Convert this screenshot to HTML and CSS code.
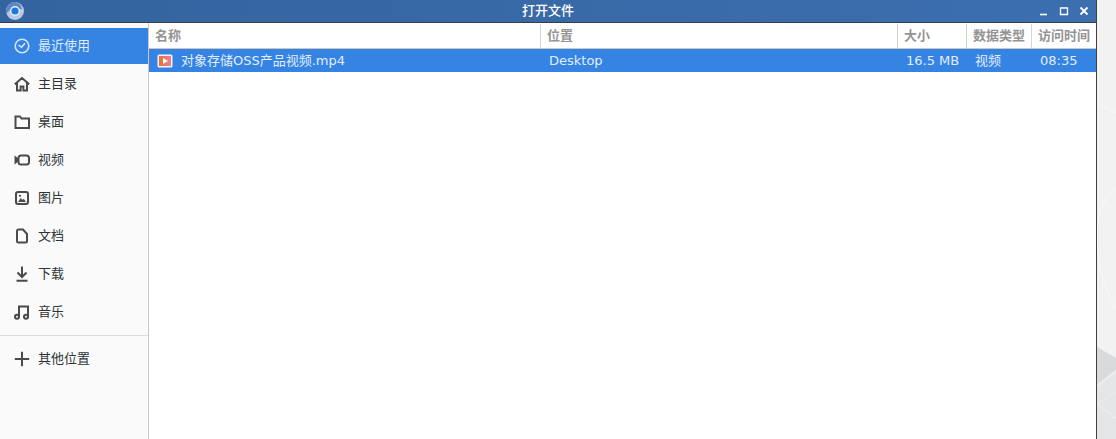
FILE: index.html
```html
<!DOCTYPE html>
<html lang="zh-CN">
<head>
    <meta charset="UTF-8">
    <meta name="viewport" content="width=device-width, initial-scale=1.0">
    <title>打开文件</title>
    <link rel="stylesheet" href="styles.css">
</head>
<body>
    <div class="desktop">
        <div class="window">
            <div class="titlebar">
                <svg class="app-icon" width="22" height="22" viewBox="0 0 22 22">
                    <circle cx="13" cy="11" r="9" fill="#b9c9e4"/>
                    <path d="M13 2a9 9 0 0 0-8.600 11.600L9 9h11a9 9 0 0 0-7-7z" fill="#5f86c4"/>
                    <circle cx="13" cy="11" r="5" fill="#e8eef8"/>
                    <circle cx="13" cy="11" r="3.600" fill="#1f78e0"/>
                </svg>
                <span class="title">打开文件</span>
                <div class="win-buttons">
                    <svg width="10" height="10" viewBox="0 0 10 10"><path d="M1 8.500h7" stroke="#fff" stroke-width="1.600"/></svg>
                    <svg width="10" height="10" viewBox="0 0 10 10"><path d="M1.500 2h7v6.500h-7z" fill="none" stroke="#fff" stroke-width="1.300"/></svg>
                    <svg width="10" height="10" viewBox="0 0 10 10"><path d="M1.500 1.500l7 7M8.500 1.500l-7 7" stroke="#fff" stroke-width="1.800"/></svg>
                </div>
            </div>
            <div class="content">
                <div class="sidebar">
                    <div class="place selected">
                        <svg class="place-icon" viewBox="0 0 16 16"><circle cx="8" cy="8" r="6.800"/><path d="M4.500 7.200L7.500 9.200 11 5.200"/></svg>
                        <span>最近使用</span>
                    </div>
                    <div class="place">
                        <svg class="place-icon" viewBox="0 0 16 16"><path d="M.8 8.300L8 2l7.200 6.300M3 6.500V14.500h3.600V10.500h2.800v4H13V6.500"/></svg>
                        <span>主目录</span>
                    </div>
                    <div class="place">
                        <svg class="place-icon" viewBox="0 0 16 16"><path d="M1.500 14V2.500h4.500l1.500 2h7.500V14z"/></svg>
                        <span>桌面</span>
                    </div>
                    <div class="place">
                        <svg class="place-icon" viewBox="0 0 16 16"><path class="solid" d="M.5 3.500l4 3v3l-4 3z"/><rect x="4.500" y="3.500" width="10.500" height="9" rx="2.500"/></svg>
                        <span>视频</span>
                    </div>
                    <div class="place">
                        <svg class="place-icon" viewBox="0 0 16 16"><rect x="2" y="2" width="12" height="12" rx="2"/><path class="solid" d="M4 12l2.800-4 1.700 2 1.200-1.200 2.300 3.200z"/><circle class="solid" cx="6" cy="5.800" r="1.100"/></svg>
                        <span>图片</span>
                    </div>
                    <div class="place">
                        <svg class="place-icon" viewBox="0 0 16 16"><path d="M3 3a1.500 1.500 0 0 1 1.500-1.500H9L13 6v7a1.500 1.500 0 0 1-1.500 1.500h-7A1.500 1.500 0 0 1 3 13z"/></svg>
                        <span>文档</span>
                    </div>
                    <div class="place">
                        <svg class="place-icon" viewBox="0 0 16 16"><path d="M8 .5v10.500M3.500 6.500L8 11l4.500-4.500M2.500 14.800h11"/></svg>
                        <span>下载</span>
                    </div>
                    <div class="place">
                        <svg class="place-icon" viewBox="0 0 16 16"><circle cx="3" cy="12.800" r="2"/><circle cx="12" cy="12.800" r="2"/><path d="M5 12.800V2.500h9v10.300"/></svg>
                        <span>音乐</span>
                    </div>
                    <div class="separator"></div>
                    <div class="place">
                        <svg class="place-icon" viewBox="0 0 16 16"><path d="M8 .8v14.400M.8 8h14.400"/></svg>
                        <span>其他位置</span>
                    </div>
                </div>
                <div class="files">
                    <div class="file-grid file-head">
                        <div class="col">名称</div>
                        <div class="col">位置</div>
                        <div class="col">大小</div>
                        <div class="col">数据类型</div>
                        <div class="col">访问时间</div>
                    </div>
                    <div class="file-grid file-row">
                        <div class="cell name-cell">
                            <svg width="16" height="14" viewBox="0 0 16 14">
                                <defs>
                                    <linearGradient id="vid" x1="0" x2="1" y1="0" y2="0">
                                        <stop offset="0" stop-color="#e8702c"/>
                                        <stop offset="1" stop-color="#e9809a"/>
                                    </linearGradient>
                                </defs>
                                <rect x="0.500" y="0.500" width="15" height="13" rx="1.500" fill="#f3f3f3"/>
                                <rect x="2" y="2" width="12" height="10" fill="url(#vid)"/>
                                <path d="M6 4l5 3-5 3z" fill="#fff"/>
                            </svg>
                            <span class="raised">对象存储OSS产品视频.mp4</span>
                        </div>
                        <div class="cell">Desktop</div>
                        <div class="cell">16.5 MB</div>
                        <div class="cell"><span class="raised">视频</span></div>
                        <div class="cell">08:35</div>
                    </div>
                </div>
            </div>
        </div>
        <svg class="wallpaper" viewBox="0 0 19 439" preserveAspectRatio="none">
            <rect width="19" height="439" fill="#f2f2f3"/>
            <path d="M0 103L19 113" stroke="#fafafa" fill="none"/>
            <path d="M19 187C6 200 0 215 0 235C0 265 8 290 19 310" stroke="#fafafa" fill="none"/>
            <path d="M0 347L19 358V371L0 386z" fill="#d9dadc"/>
            <path d="M0 386L19 371V439H0z" fill="#e5e6e8"/>
            <path d="M0 386L19 371" stroke="#eeeef0" stroke-width="2" fill="none"/>
            <path d="M0 404L19 418" stroke="#f1f1f2" fill="none"/>
            <path d="M0 404L19 392" stroke="#ecedee" fill="none"/>
        </svg>
    </div>
</body>
</html>
```
FILE: styles.css
```css
html, body {
    margin: 0;
    height: 100%;
    overflow: hidden;
}

body {
    font-family: "DejaVu Sans", "Noto Sans CJK SC", sans-serif;
    font-size: 13px;
}

.desktop {
    display: flex;
    height: 439px;
}

.window {
    width: 1096px;
    display: flex;
    flex-direction: column;
    background: white;
    border-right: 1px solid #3f4042;
}

.wallpaper {
    width: 19px;
    height: 439px;
}

.titlebar {
    height: 22px;
    display: flex;
    align-items: center;
    position: relative;
    background: linear-gradient(90deg, #34649f 0%, #3c6fb0 100%);
    border-bottom: 1px solid #3a3d42;
    color: white;
}

.app-icon {
    margin-left: 2px;
}

.title {
    position: absolute;
    left: 522px;
    top: 0;
    line-height: 19px;
    font-family: "Noto Sans CJK SC", sans-serif;
    font-weight: 500;
}

.win-buttons {
    margin-left: auto;
    display: flex;
    gap: 10px;
    padding-right: 7px;
}

.content {
    flex: 1;
    display: flex;
    min-height: 0;
}

.sidebar {
    width: 148px;
    flex-shrink: 0;
    padding-top: 5px;
    background: #fafafa;
    border-right: 1px solid #cdc7c2;
}

.place {
    height: 36px;
    margin-bottom: 2px;
    display: flex;
    align-items: center;
    gap: 8px;
    padding-left: 14px;
    color: #2e3436;
    font-family: "Noto Sans CJK SC", sans-serif;
}

.place span {
    padding-bottom: 3px;
}

.place.selected {
    background: #3584e4;
    color: #dfeafa;
}

.place-icon {
    width: 16px;
    height: 16px;
    fill: none;
    stroke: #4a4a4a;
    stroke-width: 2;
}

.place-icon .solid {
    fill: #4a4a4a;
    stroke: none;
}

.selected .place-icon {
    stroke: #d5e4f8;
    stroke-width: 1.600;
}

.separator {
    height: 1px;
    margin: 5px 0;
    background: #dedede;
}

.files {
    flex: 1;
    min-width: 0;
}

.file-grid {
    display: grid;
    grid-template-columns: 392px 357px 69px 65px 1fr;
}

.file-head {
    height: 24px;
    margin-top: 1px;
    border-bottom: 1px solid #cdc7c2;
    color: #949494;
    font-family: "Noto Sans CJK SC", sans-serif;
    font-weight: 700;
    line-height: 19px;
}

.col {
    padding-left: 6px;
    padding-top: 1px;
    border-right: 1px solid #d8d4d0;
}

.col:last-child {
    border-right: none;
}

.file-row {
    height: 23px;
    background: #3584e4;
    color: #e3edfb;
}

.cell {
    display: flex;
    align-items: center;
    padding-left: 8px;
    white-space: nowrap;
}

.raised {
    padding-bottom: 2px;
}

.name-cell {
    gap: 8px;
}
```
